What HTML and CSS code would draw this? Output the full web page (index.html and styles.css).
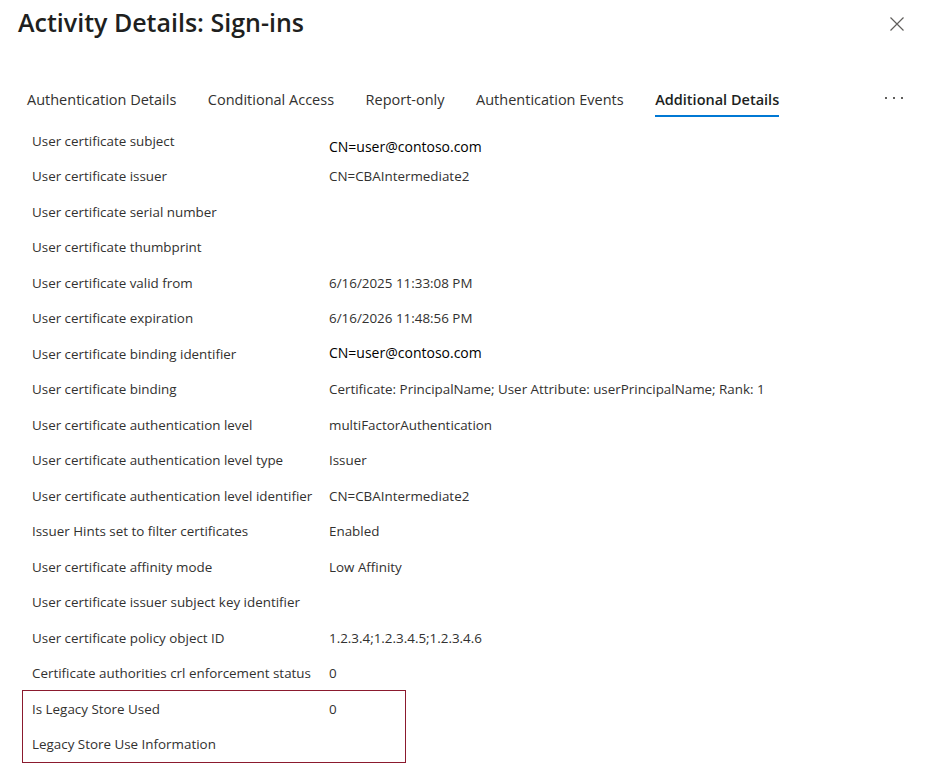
FILE: index.html
```html
<!DOCTYPE html>
<html lang="en">
<head>
<meta charset="utf-8">
<title>Activity Details: Sign-ins</title>
<link rel="stylesheet" href="styles.css">
</head>
<body>
<div class="panel">
  <header class="header">
    <h1 class="title">Activity Details: Sign-ins</h1>
    <button class="close" aria-label="Close">
      <svg width="14" height="14" viewBox="0 0 14 14"><path d="M0.5 0.5 L13.5 13.5 M13.5 0.5 L0.5 13.5" stroke="#605e5c" stroke-width="1.2" fill="none"/></svg>
    </button>
  </header>

  <nav class="tabs">
    <span class="tab">Authentication Details</span>
    <span class="tab">Conditional Access</span>
    <span class="tab">Report-only</span>
    <span class="tab">Authentication Events</span>
    <span class="tab active">Additional Details</span>
    <span class="more" aria-label="More"><i></i><i></i><i></i></span>
  </nav>

  <div class="details">
    <div class="row"><span class="label">User certificate subject</span><span class="value strong low">CN=user@contoso.com</span></div>
    <div class="row"><span class="label">User certificate issuer</span><span class="value">CN=CBAIntermediate2</span></div>
    <div class="row"><span class="label">User certificate serial number</span><span class="value"></span></div>
    <div class="row"><span class="label">User certificate thumbprint</span><span class="value"></span></div>
    <div class="row"><span class="label">User certificate valid from</span><span class="value">6/16/2025 11:33:08 PM</span></div>
    <div class="row"><span class="label">User certificate expiration</span><span class="value">6/16/2026 11:48:56 PM</span></div>
    <div class="row"><span class="label">User certificate binding identifier</span><span class="value strong high">CN=user@contoso.com</span></div>
    <div class="row"><span class="label">User certificate binding</span><span class="value">Certificate: PrincipalName; User Attribute: userPrincipalName; Rank: 1</span></div>
    <div class="row"><span class="label">User certificate authentication level</span><span class="value">multiFactorAuthentication</span></div>
    <div class="row"><span class="label">User certificate authentication level type</span><span class="value">Issuer</span></div>
    <div class="row"><span class="label">User certificate authentication level identifier</span><span class="value">CN=CBAIntermediate2</span></div>
    <div class="row"><span class="label">Issuer Hints set to filter certificates</span><span class="value">Enabled</span></div>
    <div class="row"><span class="label">User certificate affinity mode</span><span class="value">Low Affinity</span></div>
    <div class="row"><span class="label">User certificate issuer subject key identifier</span><span class="value"></span></div>
    <div class="row"><span class="label">User certificate policy object ID</span><span class="value">1.2.3.4;1.2.3.4.5;1.2.3.4.6</span></div>
    <div class="row"><span class="label">Certificate authorities crl enforcement status</span><span class="value">0</span></div>
    <div class="highlight">
      <div class="row"><span class="label">Is Legacy Store Used</span><span class="value">0</span></div>
      <div class="row"><span class="label">Legacy Store Use Information</span><span class="value"></span></div>
    </div>
  </div>
</div>
</body>
</html>
```
FILE: styles.css
```css
* { box-sizing: border-box; }

html, body {
  margin: 0;
  background: #ffffff;
}

body {
  font-family: "Open Sans", "Noto Sans", sans-serif;
  color: #323130;
}

.panel {
  width: 934px;
  height: 776px;
  overflow: hidden;
}

.header {
  display: flex;
  justify-content: space-between;
  align-items: flex-start;
  height: 80px;
  padding: 5px 30px 0 18px;
}

.title {
  margin: 0;
  font-size: 25px;
  line-height: 34px;
  font-weight: 600;
  color: #201f1e;
}

.close {
  margin-top: 12px;
  padding: 0;
  border: 0;
  background: none;
  width: 14px;
  height: 14px;
  display: flex;
}

.tabs {
  display: flex;
  align-items: flex-start;
  gap: 31.5px;
  padding: 0 31px 0 27px;
  height: 37px;
}

.tab {
  padding-top: 10px;
  padding-bottom: 5px;
  font-size: 14.5px;
  line-height: 20px;
  color: #323130;
  border-bottom: 2px solid transparent;
  white-space: nowrap;
}

.tab.active {
  font-weight: 600;
  color: #201f1e;
  border-bottom-color: #0078d4;
}

.more {
  margin-left: auto;
  display: flex;
  gap: 6px;
  padding-top: 17px;
}

.more i {
  width: 2px;
  height: 2px;
  background: #605e5c;
  display: block;
}

.details {
  margin-top: 6px;
  padding-left: 32px;
}

.row {
  display: grid;
  grid-template-columns: 297px 1fr;
  align-items: center;
  height: 35.5px;
  font-size: 13.4px;
  line-height: 18px;
}

.label {
  color: #323130;
  white-space: nowrap;
}

.value {
  color: #323130;
  white-space: nowrap;
}

.value.strong {
  color: #000000;
  font-size: 14px;
}

.value.low {
  padding-top: 12px;
}

.value.high {
  padding-bottom: 2px;
}

.highlight {
  width: 384px;
  margin: -1px 0 0 -10px;
  padding-left: 9px;
  border: 1px solid #8b1a2e;
}
```
